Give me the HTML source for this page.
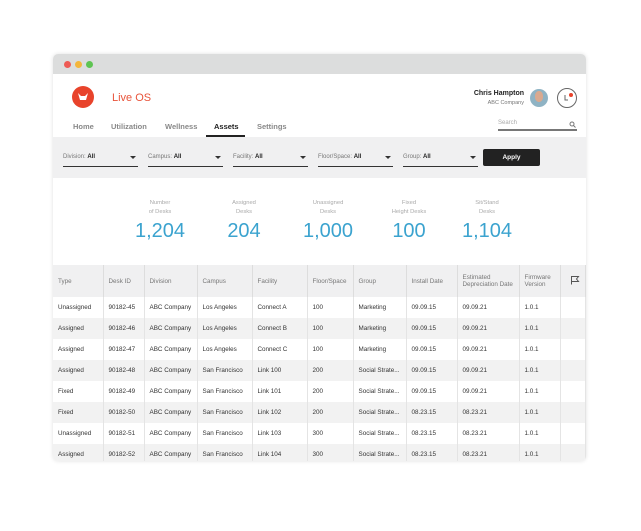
<!DOCTYPE html>
<html><head><meta charset="utf-8"><style>
*{margin:0;padding:0;box-sizing:border-box}
body{width:641px;height:531px;background:#fff;font-family:"Liberation Sans",sans-serif;position:relative;overflow:hidden}
.card{position:absolute;left:53px;top:54px;width:533px;height:407px;border-radius:5px;overflow:hidden;box-shadow:0 0 4px rgba(0,0,0,.12);background:#fff}
.bar{height:20px;background:#dcdddd;position:relative}
.dot{position:absolute;top:7px;width:7px;height:7px;border-radius:50%}
.abs{position:absolute}
.nav{font-size:7.5px;font-weight:bold;color:#888;top:68px}
.filters{position:absolute;left:0;top:83px;width:533px;height:41px;background:#f0f0f1}
.dd{position:absolute;top:17px;width:75px;height:13px;border-bottom:1.5px solid #333;font-size:6px;color:#777}
.dd b{color:#222}
.dd i{position:absolute;right:2px;top:2px;border-left:3px solid transparent;border-right:3px solid transparent;border-top:3px solid #333}
.stat{position:absolute;top:145px;width:90px;text-align:center;color:#aaa;font-size:5.8px;line-height:9px}
.stat div{color:#3ba3cf;font-size:20px;line-height:24px;margin-top:2px}
table{position:absolute;left:0;top:211px;width:533px;border-collapse:collapse;font-size:6.3px;color:#333}
td,th{border-right:1px solid #e4e4e4;padding-left:5px;text-align:left;height:21px;font-weight:normal}
th{height:32px;color:#777;background:#f0f0f1;border-right:1px solid #ddd}
tr:nth-child(odd) td{background:#f2f2f2}
</style></head><body>
<div class="card">
 <div class="bar"><div class="dot" style="left:11px;background:#ee5b55"></div><div class="dot" style="left:22px;background:#f4b63c"></div><div class="dot" style="left:33px;background:#5ec452"></div></div>
 <div class="abs" style="left:19px;top:32px;width:22px;height:22px;border-radius:50%;background:#e8432b"></div>
 <svg class="abs" style="left:22px;top:36px" width="16" height="14"><path d="M3 3 L5 10 L11 10 L13 3 L10 6 L6 6 Z" fill="#fff"/></svg>
 <div class="abs" style="left:59px;top:38px;font-size:11px;color:#e8533a">Live OS</div>
 <div class="abs" style="left:400px;top:36px;width:71px;text-align:right;font-size:7px;font-weight:bold;color:#222">Chris Hampton</div>
 <div class="abs" style="left:400px;top:46px;width:71px;text-align:right;font-size:5.5px;color:#777">ABC Company</div>
 <div class="abs" style="left:477px;top:35px;width:18px;height:18px;border-radius:50%;background:#8fb3c4"></div>
 <div class="abs" style="left:482px;top:37px;width:8px;height:11px;border-radius:45%;background:#d9a98f"></div>
 <div class="abs" style="left:504px;top:34px;width:20px;height:20px;border-radius:50%;border:1.3px solid #666"></div>
 <svg class="abs" style="left:508px;top:38px" width="12" height="12"><path d="M4 3 L4 8 L7 8" fill="none" stroke="#666" stroke-width="1"/></svg>
 <div class="abs" style="left:516px;top:39px;width:4px;height:4px;border-radius:50%;background:#e8432b"></div>
 <div class="nav abs" style="left:20px">Home</div>
 <div class="nav abs" style="left:58px">Utilization</div>
 <div class="nav abs" style="left:112px">Wellness</div>
 <div class="nav abs" style="left:161px;color:#222">Assets</div>
 <div class="abs" style="left:153px;top:81px;width:39px;height:2px;background:#222"></div>
 <div class="nav abs" style="left:204px">Settings</div>
 <div class="abs" style="left:445px;top:66px;font-size:6px;color:#aaa">Search</div>
 <div class="abs" style="left:445px;top:75px;width:79px;height:1.5px;background:#777"></div>
 <svg class="abs" style="left:516px;top:67px" width="7" height="7"><circle cx="3" cy="3" r="2" fill="none" stroke="#777" stroke-width="1"/><path d="M4.5 4.5 L6.5 6.5" stroke="#777"/></svg>
 <div class="filters">
  <div class="dd" style="left:10px">Division: <b>All</b><i></i></div>
  <div class="dd" style="left:95px">Campus: <b>All</b><i></i></div>
  <div class="dd" style="left:180px">Facility: <b>All</b><i></i></div>
  <div class="dd" style="left:265px">Floor/Space: <b>All</b><i></i></div>
  <div class="dd" style="left:350px">Group: <b>All</b><i></i></div>
  <div class="abs" style="left:430px;top:12px;width:57px;height:17px;background:#222;border-radius:2px;color:#fff;font-size:6.5px;font-weight:bold;text-align:center;line-height:17px">Apply</div>
 </div>
 <div class="stat" style="left:62px">Number<br>of Desks<div>1,204</div></div>
 <div class="stat" style="left:146px">Assigned<br>Desks<div>204</div></div>
 <div class="stat" style="left:230px">Unassigned<br>Desks<div>1,000</div></div>
 <div class="stat" style="left:311px">Fixed<br>Height Desks<div>100</div></div>
 <div class="stat" style="left:389px">Sit/Stand<br>Desks<div>1,104</div></div>
 <table>
  <tr><th style="width:50px">Type</th><th style="width:41px">Desk ID</th><th style="width:53px">Division</th><th style="width:55px">Campus</th><th style="width:55px">Facility</th><th style="width:46px">Floor/Space</th><th style="width:53px">Group</th><th style="width:51px">Install Date</th><th style="width:62px">Estimated<br>Depreciation Date</th><th style="width:41px">Firmware<br>Version</th><th><svg width="10" height="10" style="margin-left:4px"><path d="M1.5 9.5 V1.5 H8.5 L6.5 4 L8.5 6.5 H1.5" fill="none" stroke="#555" stroke-width="1"/></svg></th></tr>
  <tr><td>Unassigned</td><td>90182-45</td><td>ABC Company</td><td>Los Angeles</td><td>Connect A</td><td>100</td><td>Marketing</td><td>09.09.15</td><td>09.09.21</td><td>1.0.1</td><td></td></tr>
  <tr><td>Assigned</td><td>90182-46</td><td>ABC Company</td><td>Los Angeles</td><td>Connect B</td><td>100</td><td>Marketing</td><td>09.09.15</td><td>09.09.21</td><td>1.0.1</td><td></td></tr>
  <tr><td>Assigned</td><td>90182-47</td><td>ABC Company</td><td>Los Angeles</td><td>Connect C</td><td>100</td><td>Marketing</td><td>09.09.15</td><td>09.09.21</td><td>1.0.1</td><td></td></tr>
  <tr><td>Assigned</td><td>90182-48</td><td>ABC Company</td><td>San Francisco</td><td>Link 100</td><td>200</td><td>Social Strate...</td><td>09.09.15</td><td>09.09.21</td><td>1.0.1</td><td></td></tr>
  <tr><td>Fixed</td><td>90182-49</td><td>ABC Company</td><td>San Francisco</td><td>Link 101</td><td>200</td><td>Social Strate...</td><td>09.09.15</td><td>09.09.21</td><td>1.0.1</td><td></td></tr>
  <tr><td>Fixed</td><td>90182-50</td><td>ABC Company</td><td>San Francisco</td><td>Link 102</td><td>200</td><td>Social Strate...</td><td>08.23.15</td><td>08.23.21</td><td>1.0.1</td><td></td></tr>
  <tr><td>Unassigned</td><td>90182-51</td><td>ABC Company</td><td>San Francisco</td><td>Link 103</td><td>300</td><td>Social Strate...</td><td>08.23.15</td><td>08.23.21</td><td>1.0.1</td><td></td></tr>
  <tr><td>Assigned</td><td>90182-52</td><td>ABC Company</td><td>San Francisco</td><td>Link 104</td><td>300</td><td>Social Strate...</td><td>08.23.15</td><td>08.23.21</td><td>1.0.1</td><td></td></tr>
 </table>
</div>
</body></html>
